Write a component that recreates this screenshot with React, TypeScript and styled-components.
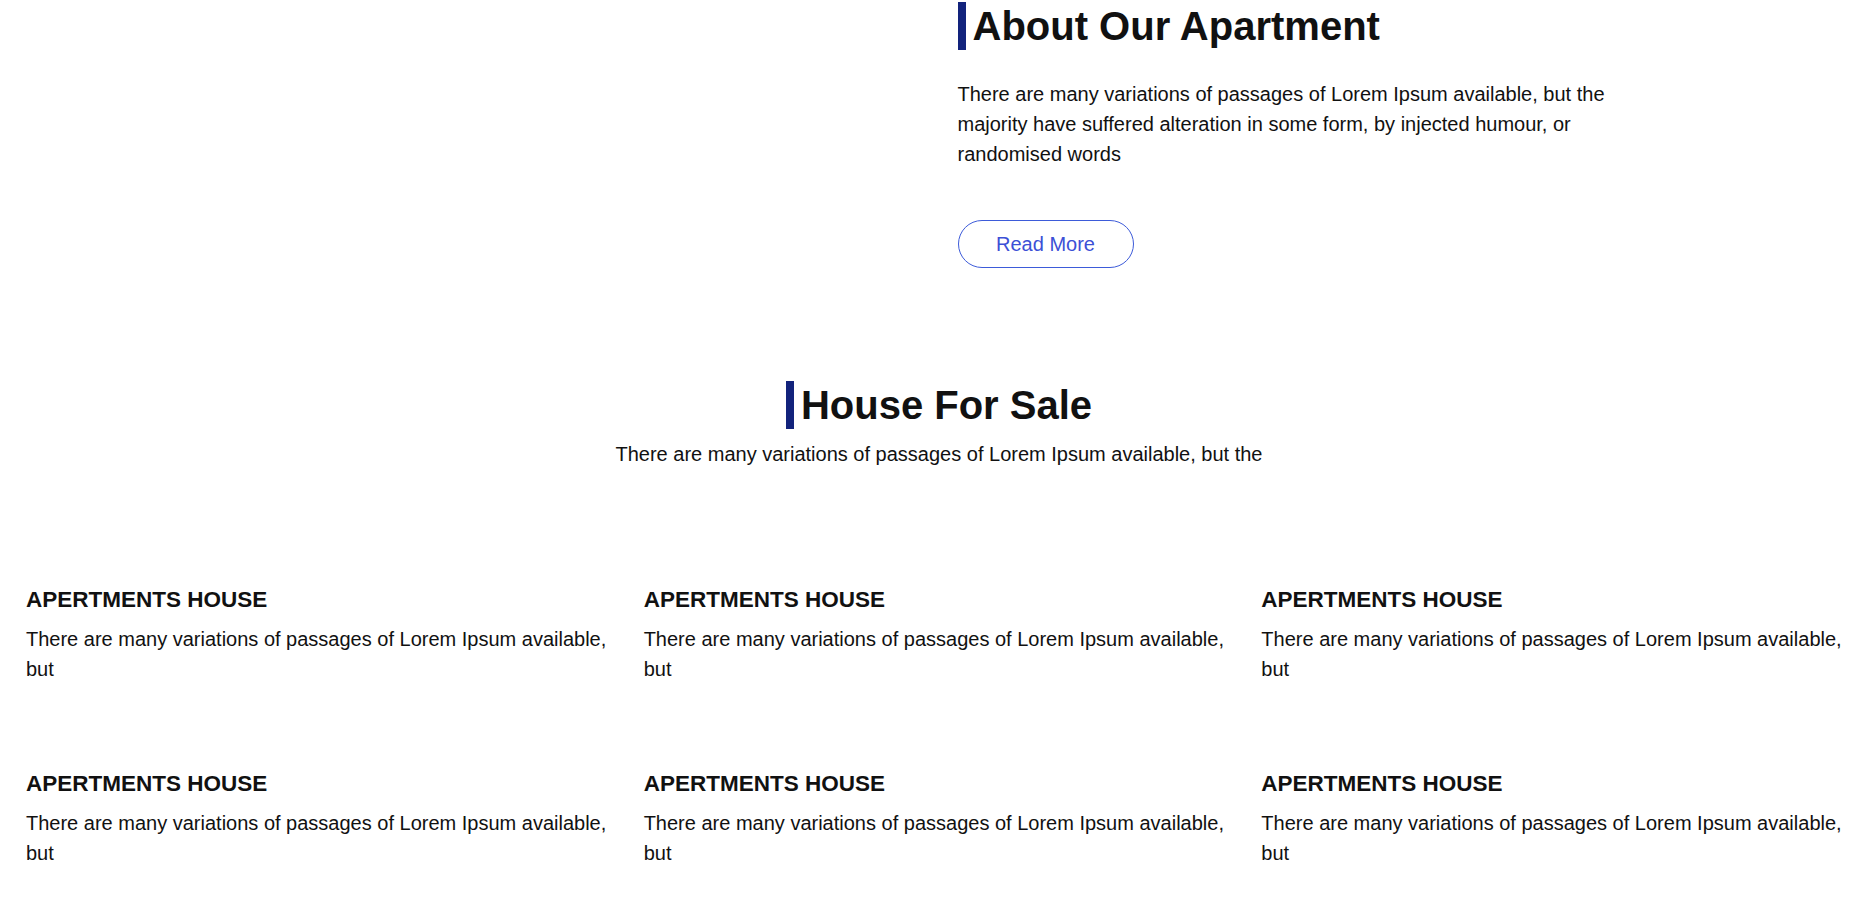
import styled, { createGlobalStyle } from "styled-components";

const GlobalStyle = createGlobalStyle`
  body {
    margin: 0;
    background: #fff;
    font-family: "Liberation Sans", Arial, sans-serif;
    color: #111;
  }
`;

const Page = styled.div`
  width: 100%;
  padding-top: 2px;
`;

const AboutSection = styled.section`
  display: grid;
  grid-template-columns: 1fr 1fr;
`;

const AboutText = styled.div`
  padding-left: 23px;
  max-width: 700px;
`;

const Title = styled.h2`
  display: inline-block;
  margin: 0;
  font-size: 40px;
  line-height: 48px;
  font-weight: 700;
  border-left: 8px solid #12237c;
  padding-left: 7px;
`;

const Text = styled.p<{ $top?: number }>`
  margin: ${(p) => p.$top ?? 0}px 0 0;
  font-size: 20px;
  line-height: 30px;
`;

const ReadMore = styled.button`
  margin-top: 51px;
  width: 176px;
  height: 48px;
  border: 1px solid #3d5bd9;
  border-radius: 24px;
  background: #fff;
  color: #3c50d6;
  font-family: inherit;
  font-size: 20px;
  cursor: pointer;
`;

const SaleSection = styled.section`
  margin-top: 113px;
  padding-left: 9px;
  text-align: center;
`;

const Cards = styled.div`
  display: grid;
  grid-template-columns: repeat(3, 1fr);
  row-gap: 87px;
  padding: 0 5px 0 11px;
  margin-top: 118px;
`;

const Card = styled.div`
  padding: 0 15px;
`;

const CardTitle = styled.h4`
  margin: 0;
  font-size: 22.5px;
  line-height: 26px;
  font-weight: 700;
`;

const lorem =
  "There are many variations of passages of Lorem Ipsum available, but";

export default function App() {
  return (
    <Page>
      <GlobalStyle />
      <AboutSection>
        <div />
        <AboutText>
          <Title>About Our Apartment</Title>
          <Text $top={29}>
            There are many variations of passages of Lorem Ipsum available,
            but the majority have suffered alteration in some form, by
            injected humour, or randomised words
          </Text>
          <ReadMore>Read More</ReadMore>
        </AboutText>
      </AboutSection>

      <SaleSection>
        <Title>House For Sale</Title>
        <Text $top={10}>
          There are many variations of passages of Lorem Ipsum available, but
          the
        </Text>
      </SaleSection>

      <Cards>
        {Array.from({ length: 6 }).map((_, i) => (
          <Card key={i}>
            <CardTitle>APERTMENTS HOUSE</CardTitle>
            <Text $top={11}>{lorem}</Text>
          </Card>
        ))}
      </Cards>
    </Page>
  );
}
